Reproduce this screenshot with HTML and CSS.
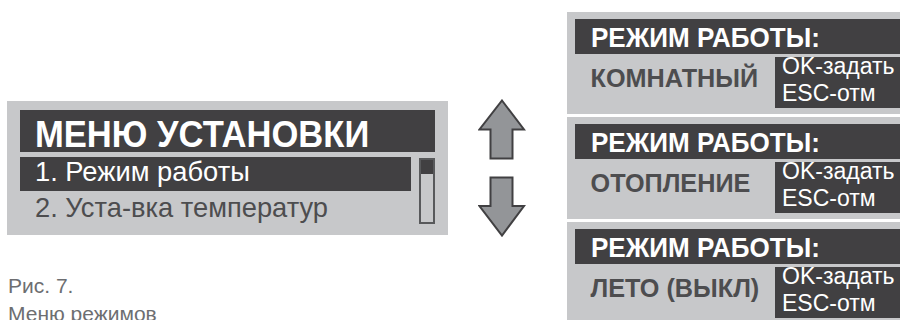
FILE: index.html
```html
<!DOCTYPE html>
<html lang="ru">
<head>
    <meta charset="UTF-8">
    <title>Меню установки</title>
    <link rel="stylesheet" href="styles.css">
</head>
<body>
    <!-- Left: display of the setup menu and the caption under it -->
    <div class="figure">
        <div class="lcd">
            <div class="lcd-title"><span class="narrow">МЕНЮ УСТАНОВКИ</span></div>
            <div class="lcd-body">
                <div class="lcd-list">
                    <div class="lcd-row selected"><span class="narrow">1. Режим работы</span></div>
                    <div class="lcd-row"><span class="narrow">2. Уста-вка температур</span></div>
                </div>
                <div class="scrollbar"><div class="thumb"></div></div>
            </div>
        </div>
        <p class="caption">Рис. 7.<br>Меню режимов</p>
    </div>

    <!-- Middle: up / down arrows -->
    <svg class="arrows" width="48" height="140" viewBox="0 0 48 140">
        <polygon points="24,1.5 46,30.5 34.5,30.5 34.5,59.5 12.5,59.5 12.5,30.5 1.5,30.5"/>
        <polygon points="12.5,78.5 34.5,78.5 34.5,107 46,107 24,136.5 1.5,107 12.5,107"/>
    </svg>

    <!-- Right: the three operating modes -->
    <div class="modes">
        <div class="mode">
            <div class="mode-title"><span class="narrow">РЕЖИМ РАБОТЫ:</span></div>
            <div class="mode-row">
                <span class="mode-name narrow">КОМНАТНЫЙ</span>
                <div class="keys"><div class="keys-text">OK-задать<br>ESC-отм</div></div>
            </div>
        </div>
        <div class="mode">
            <div class="mode-title"><span class="narrow">РЕЖИМ РАБОТЫ:</span></div>
            <div class="mode-row">
                <span class="mode-name narrow">ОТОПЛЕНИЕ</span>
                <div class="keys"><div class="keys-text">OK-задать<br>ESC-отм</div></div>
            </div>
        </div>
        <div class="mode">
            <div class="mode-title"><span class="narrow">РЕЖИМ РАБОТЫ:</span></div>
            <div class="mode-row">
                <span class="mode-name narrow">ЛЕТО (ВЫКЛ)</span>
                <div class="keys"><div class="keys-text">OK-задать<br>ESC-отм</div></div>
            </div>
        </div>
    </div>
</body>
</html>
```

FILE: styles.css
```css
/* Page */
body {
    margin: 0;
    width: 900px;
    height: 320px;
    overflow: hidden;
    display: flex;
    align-items: flex-start;
    background: #FFFFFF;
    font-family: "Liberation Sans", Arial, sans-serif;
}

/* Text squeezed a little, like the display font */
.narrow {
    display: inline-block;
    transform: scaleX(0.93);
    transform-origin: left center;
    white-space: nowrap;
}

/* ---------- Left figure ---------- */
.figure {
    width: 441px;
    padding: 101px 0 0 7px;
}

.lcd {
    background: #C7C8CA;
    padding: 9px 13px 10px 13px;
}

.lcd-title {
    background: #414042;
    color: #FFFFFF;
    font-size: 36px;
    font-weight: bold;
    height: 35px;
    line-height: 35px;
    padding: 7px 0 0 15px;
}

.lcd-title .narrow {
    transform: scaleX(0.96);
}

.lcd-body {
    display: flex;
    gap: 8px;
    margin-top: 5px;
}

.lcd-list {
    width: 392px;
}

.lcd-row {
    font-size: 28px;
    color: #4D4D4F;
    height: 34px;
    line-height: 34px;
    padding-left: 15px;
}

.lcd-row .narrow {
    transform: scaleX(0.975);
}

.lcd-row.selected {
    background: #414042;
    color: #FFFFFF;
    line-height: 30px;
}

.scrollbar {
    width: 12px;
    height: 62px;
    margin-top: 1px;
    border: 2px solid #58595B;
}

.thumb {
    height: 14px;
    background: #414042;
}

.caption {
    margin: 37px 0 0 1px;
    font-size: 21px;
    line-height: 28px;
    color: #6D6E71;
}

/* ---------- Arrows ---------- */
.arrows {
    margin: 99px 0 0 30px;
    fill: #939598;
    stroke: #414042;
    stroke-width: 2;
}

/* ---------- Mode panels ---------- */
.modes {
    width: 333px;
    margin-left: auto;
    padding-top: 12px;
    display: flex;
    flex-direction: column;
    gap: 3px;
}

.mode {
    background: #C7C8CA;
    padding: 7px 0 6px 8px;
}

.mode-title {
    background: #414042;
    color: #FFFFFF;
    font-size: 28px;
    font-weight: bold;
    height: 32px;
    line-height: 32px;
    padding: 3px 0 0 16px;
}

.mode-row {
    display: flex;
    justify-content: space-between;
    margin-top: 3px;
}

.mode-name {
    padding-left: 16px;
    font-size: 26px;
    font-weight: bold;
    line-height: 42px;
    color: #4D4D4F;
}

.mode-name.narrow {
    transform: scaleX(0.97);
}

.keys {
    width: 118px;
    height: 51px;
    padding-left: 7px;
    background: #414042;
    color: #FFFFFF;
    font-size: 23px;
    line-height: 27px;
}

.keys-text {
    margin-top: -4px;
    white-space: nowrap;
}
```
